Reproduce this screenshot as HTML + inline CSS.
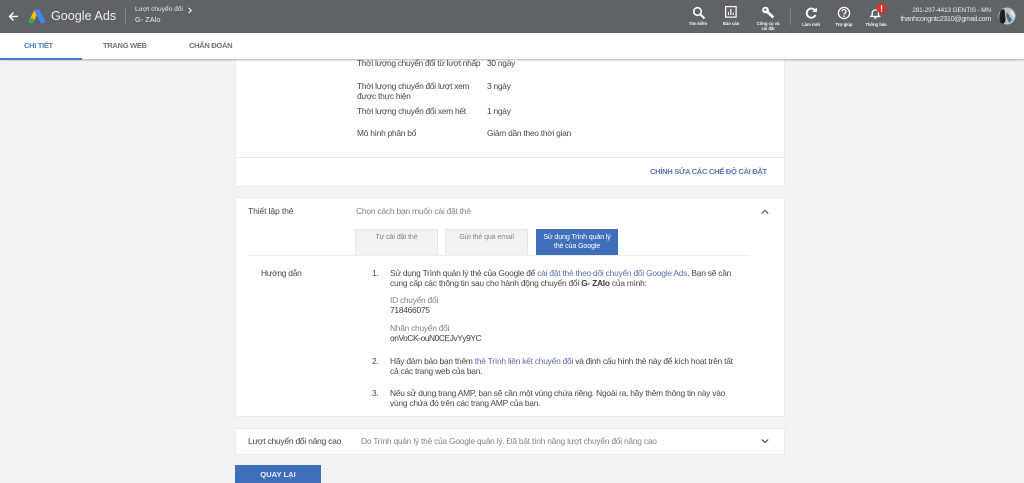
<!DOCTYPE html>
<html lang="vi"><head><meta charset="utf-8"><title>Google Ads</title>
<style>
html,body{margin:0;padding:0;width:1024px;height:483px;overflow:hidden;background:#f1f3f4}
body{font-family:"Liberation Sans","Noto Sans CJK SC",sans-serif;color:#3c4043}
#w{position:absolute;left:0;top:0;width:1024px;height:483px;overflow:hidden;filter:blur(.3px)}
.t{position:absolute;white-space:nowrap;font-size:8.4px;line-height:10px;color:#45484b;letter-spacing:-.25px}
.lg{letter-spacing:-.22px}
.b{position:absolute;box-sizing:border-box}
.card{position:absolute;left:235px;width:550px;background:#fff;border:1px solid #e8eaed;box-sizing:border-box}
.g{color:#80868b}.l{color:#5a6fb5}
.ic{position:absolute;font-size:4.4px;line-height:5px;color:#f1f3f4;text-align:center;white-space:nowrap;font-weight:bold;letter-spacing:-.1px}
.tab{font-size:7.6px;font-weight:bold;letter-spacing:-.35px}
svg{position:absolute;overflow:visible}
</style></head><body><div id="w">

<div class="b" style="left:0;top:0;width:1024px;height:33px;background:#5f6368;z-index:3"></div>
<div class="b" style="left:0;top:33px;width:1024px;height:26px;background:#fff;box-shadow:0 1px 2px rgba(0,0,0,.3);z-index:2"></div>
<div class="b" style="left:0;top:58px;width:82px;height:2px;background:#4a78c8;z-index:3"></div>

<div style="position:absolute;left:0;top:0;width:1024px;height:60px;z-index:4">
<svg style="left:8px;top:11px" width="11" height="11" viewBox="0 0 11 11"><path d="M10 5.5H2M5.5 1.500 1.500 5.500 5.500 9.500" fill="none" stroke="#fff" stroke-width="1.400"/></svg>
<svg style="left:28px;top:8px" width="18" height="16" viewBox="0 0 18 16"><path d="M3.500 13 8 3.500" stroke="#fbbc04" stroke-width="4.500" fill="none"/><path d="M9.500 3.500 14.500 13" stroke="#4285f4" stroke-width="5" stroke-linecap="round" fill="none"/><circle cx="3.400" cy="12.800" r="2.700" fill="#34a853"/></svg>
<div class="t" style="left:51px;top:8px;font-size:12.600px;line-height:16px;color:#e8eaed;letter-spacing:0">Google Ads</div>
<div class="b" style="left:125px;top:8px;width:1px;height:17px;background:#80848a"></div>
<div class="t" style="left:135px;top:5px;font-size:6.600px;color:#e8eaed;letter-spacing:0">Lượt chuyển đổi</div>
<svg style="left:187px;top:7px" width="6" height="7" viewBox="0 0 6 7"><path d="M1.500 .8 4.300 3.500 1.500 6.200" fill="none" stroke="#fff" stroke-width="1"/></svg>
<div class="t" style="left:135px;top:15px;font-size:7.400px;color:#e8eaed;letter-spacing:0">G- ZAlo</div>

<div class="t tab" style="left:24px;top:41px;color:#5b82c4">CHI TIẾT</div>
<div class="t tab" style="left:103px;top:41px;color:#70757a">TRANG WEB</div>
<div class="t tab" style="left:189px;top:41px;color:#70757a">CHẨN ĐOÁN</div>

<svg style="left:692px;top:6px" width="14" height="14" viewBox="0 0 14 14"><circle cx="5.500" cy="5.500" r="3.800" fill="none" stroke="#fff" stroke-width="1.600"/><path d="M8.300 8.300 12.500 12.500" stroke="#fff" stroke-width="2"/></svg>
<div class="ic" style="left:688px;top:21px;width:20px">Tìm kiếm</div>
<svg style="left:725px;top:6px" width="12" height="12" viewBox="0 0 12 12"><rect x=".6" y=".6" width="10.500" height="10.500" fill="none" stroke="#fff" stroke-width="1.200"/><path d="M3.500 9V6M5.800 9V3M8.200 9V7" stroke="#fff" stroke-width="1.100"/></svg>
<div class="ic" style="left:721px;top:21px;width:20px">Báo cáo</div>
<svg style="left:761px;top:6px" width="14" height="14" viewBox="0 0 14 14"><circle cx="4.500" cy="4" r="3.300" fill="#fff"/><path d="M5.500 5 12.300 11.500" stroke="#fff" stroke-width="2.800"/><circle cx="4.200" cy="3.600" r="1.100" fill="#5f6368"/></svg>
<div class="ic" style="left:753px;top:21px;width:30px;white-space:normal">Công cụ và<br>cài đặt</div>
<div class="b" style="left:790px;top:8px;width:1px;height:17px;background:#80848a"></div>
<svg style="left:805px;top:7px" width="13" height="13" viewBox="0 0 13 13"><path d="M10.500 8A4.600 4.600 0 1 1 9.700 3" fill="none" stroke="#fff" stroke-width="1.800"/><path d="M11.800 .5V5H7.300Z" fill="#fff"/></svg>
<div class="ic" style="left:801px;top:22px;width:20px">Làm mới</div>
<svg style="left:837px;top:6px" width="14" height="14" viewBox="0 0 14 14"><circle cx="7" cy="7" r="5.600" fill="none" stroke="#fff" stroke-width="1.300"/><path d="M5 5.500A2 2 0 1 1 7.500 7.400C7 7.700 7 8 7 8.600" fill="none" stroke="#fff" stroke-width="1.200"/><circle cx="7" cy="10.200" r=".8" fill="#fff"/></svg>
<div class="ic" style="left:834px;top:22px;width:20px">Trợ giúp</div>
<svg style="left:870px;top:7px" width="11" height="13" viewBox="0 0 11 13"><path d="M1 9.500H9.500L8.500 8.300V5.500A3.200 3.200 0 0 0 2.200 5.500V8.300Z" fill="none" stroke="#fff" stroke-width="1.300"/><rect x="4.300" y="10.300" width="2.200" height="1.400" fill="#fff"/></svg>
<svg style="left:876px;top:3px" width="11" height="11" viewBox="0 0 11 11"><circle cx="5.500" cy="5.500" r="5" fill="#d93025"/><rect x="4.900" y="2.200" width="1.300" height="4.300" fill="#fff"/><rect x="4.900" y="7.300" width="1.300" height="1.300" fill="#fff"/></svg>
<div class="ic" style="left:865px;top:22px;width:22px">Thông báo</div>

<div class="t" style="right:33px;top:6px;font-size:6.600px;color:#e8eaed;letter-spacing:-.2px">281-297-4413 GENTIS - MN</div>
<div class="t" style="right:33px;top:14px;font-size:7.200px;color:#e8eaed;letter-spacing:-.33px">thanhcongntc2310@gmail.com</div>
<svg style="left:998px;top:7px" width="18" height="18" viewBox="0 0 18 18"><circle cx="9" cy="9" r="8.500" fill="#b9c4c9"/><path d="M3 3C1 7 .5 13 3 16 6 18 8 15 7.500 11 7 7 7 4 6 2Z" fill="#1c1d20"/><path d="M9 5 14 13 11 16 8 9Z" fill="#4d7388"/><path d="M13 3 17 8 16 11 12 6Z" fill="#e5e9ea"/></svg>
</div>

<div class="card" style="top:50px;height:137px;border-top:0"></div>
<div class="b" style="left:235px;top:157px;width:550px;height:1px;background:#e8eaed"></div>
<div class="t" style="left:357px;top:58px;letter-spacing:-.3px">Thời lượng chuyển đổi từ lượt nhấp</div>
<div class="t" style="left:487px;top:58px">30 ngày</div>
<div class="t" style="left:357px;top:81px;letter-spacing:-.27px">Thời lượng chuyển đổi lượt xem</div>
<div class="t" style="left:357px;top:91px">được thực hiện</div>
<div class="t" style="left:487px;top:81px">3 ngày</div>
<div class="t" style="left:357px;top:106px;letter-spacing:-.27px">Thời lượng chuyển đổi xem hết</div>
<div class="t" style="left:487px;top:106px">1 ngày</div>
<div class="t" style="left:357px;top:128px">Mô hình phân bổ</div>
<div class="t" style="left:487px;top:128px">Giảm dần theo thời gian</div>
<div class="t" style="left:650px;top:167px;font-size:7.600px;font-weight:bold;color:#5f77b8;letter-spacing:-.32px">CHỈNH SỬA CÁC CHẾ ĐỘ CÀI ĐẶT</div>

<div class="card" style="top:197px;height:220px"></div>
<div class="t" style="left:248px;top:206px;font-size:8.600px;letter-spacing:-.15px">Thiết lập thẻ</div>
<div class="t g" style="left:356px;top:206px;font-size:8.600px;letter-spacing:-.3px">Chọn cách bạn muốn cài đặt thẻ</div>
<svg style="left:761px;top:209px" width="8" height="6" viewBox="0 0 8 6"><path d="M.8 4.500 4 1.500 7.200 4.500" fill="none" stroke="#5f6368" stroke-width="1.200"/></svg>
<div class="b" style="left:355px;top:229px;width:83px;height:26px;background:#f1f3f4;border:1px solid #e3e5e8;border-bottom:0"></div>
<div class="b" style="left:445px;top:229px;width:83px;height:26px;background:#f1f3f4;border:1px solid #e3e5e8;border-bottom:0"></div>
<div class="b" style="left:536px;top:229px;width:82px;height:26px;background:#3f6fb8"></div>
<div class="t g" style="left:355px;top:232px;width:83px;text-align:center;font-size:7.200px;letter-spacing:-.15px">Tự cài đặt thẻ</div>
<div class="t g" style="left:445px;top:232px;width:83px;text-align:center;font-size:7.200px;letter-spacing:-.15px">Gửi thẻ qua email</div>
<div class="t" style="left:536px;top:233px;width:82px;text-align:center;font-size:7.200px;line-height:8.500px;color:#fff;letter-spacing:-.18px">Sử dụng Trình quản lý<br>thẻ của Google</div>
<div class="b" style="left:248px;top:255px;width:502px;height:1px;background:#eceef0"></div>

<div class="t" style="left:261px;top:268px">Hướng dẫn</div>
<div class="t" style="left:372px;top:268px">1.</div>
<div class="t lg" style="left:390px;top:268px">Sử dụng Trình quản lý thẻ của Google để <span class="l">cài đặt thẻ theo dõi chuyển đổi Google Ads</span>. Bạn sẽ cần</div>
<div class="t lg" style="left:390px;top:278px">cung cấp các thông tin sau cho hành động chuyển đổi <b style="color:#3c4043">G- ZAlo</b> của mình:</div>
<div class="t g" style="left:390px;top:295px">ID chuyển đổi</div>
<div class="t" style="left:390px;top:305px;color:#3c4043">718466075</div>
<div class="t g" style="left:390px;top:323px">Nhãn chuyển đổi</div>
<div class="t" style="left:390px;top:333px;color:#3c4043;letter-spacing:-.42px">onVoCK-ouN0CEJvYy9YC</div>
<div class="t" style="left:372px;top:356px">2.</div>
<div class="t lg" style="left:390px;top:356px">Hãy đảm bảo bạn thêm <span class="l">thẻ Trình liên kết chuyển đổi</span> và định cấu hình thẻ này để kích hoạt trên tất</div>
<div class="t lg" style="left:390px;top:366px">cả các trang web của bạn.</div>
<div class="t" style="left:372px;top:388px">3.</div>
<div class="t lg" style="left:390px;top:388px">Nếu sử dụng trang AMP, bạn sẽ cần một vùng chứa riêng. Ngoài ra, hãy thêm thông tin này vào</div>
<div class="t lg" style="left:390px;top:398px">vùng chứa đó trên các trang AMP của bạn.</div>

<div class="card" style="top:428px;height:27px"></div>
<div class="t" style="left:248px;top:436px;font-size:8.600px;letter-spacing:-.3px">Lượt chuyển đổi nâng cao</div>
<div class="t g" style="left:361px;top:436px;letter-spacing:-.22px">Do Trình quản lý thẻ của Google quản lý. Đã bật tính năng lượt chuyển đổi nâng cao</div>
<svg style="left:761px;top:438px" width="8" height="6" viewBox="0 0 8 6"><path d="M.8 1.500 4 4.500 7.200 1.500" fill="none" stroke="#5f6368" stroke-width="1.200"/></svg>

<div class="b" style="left:235px;top:465px;width:86px;height:18px;background:#3f6fb8"></div>
<div class="t" style="left:235px;top:470px;width:86px;text-align:center;font-size:7.600px;font-weight:bold;color:#e8eefa;letter-spacing:0">QUAY LẠI</div>
</div></body></html>
